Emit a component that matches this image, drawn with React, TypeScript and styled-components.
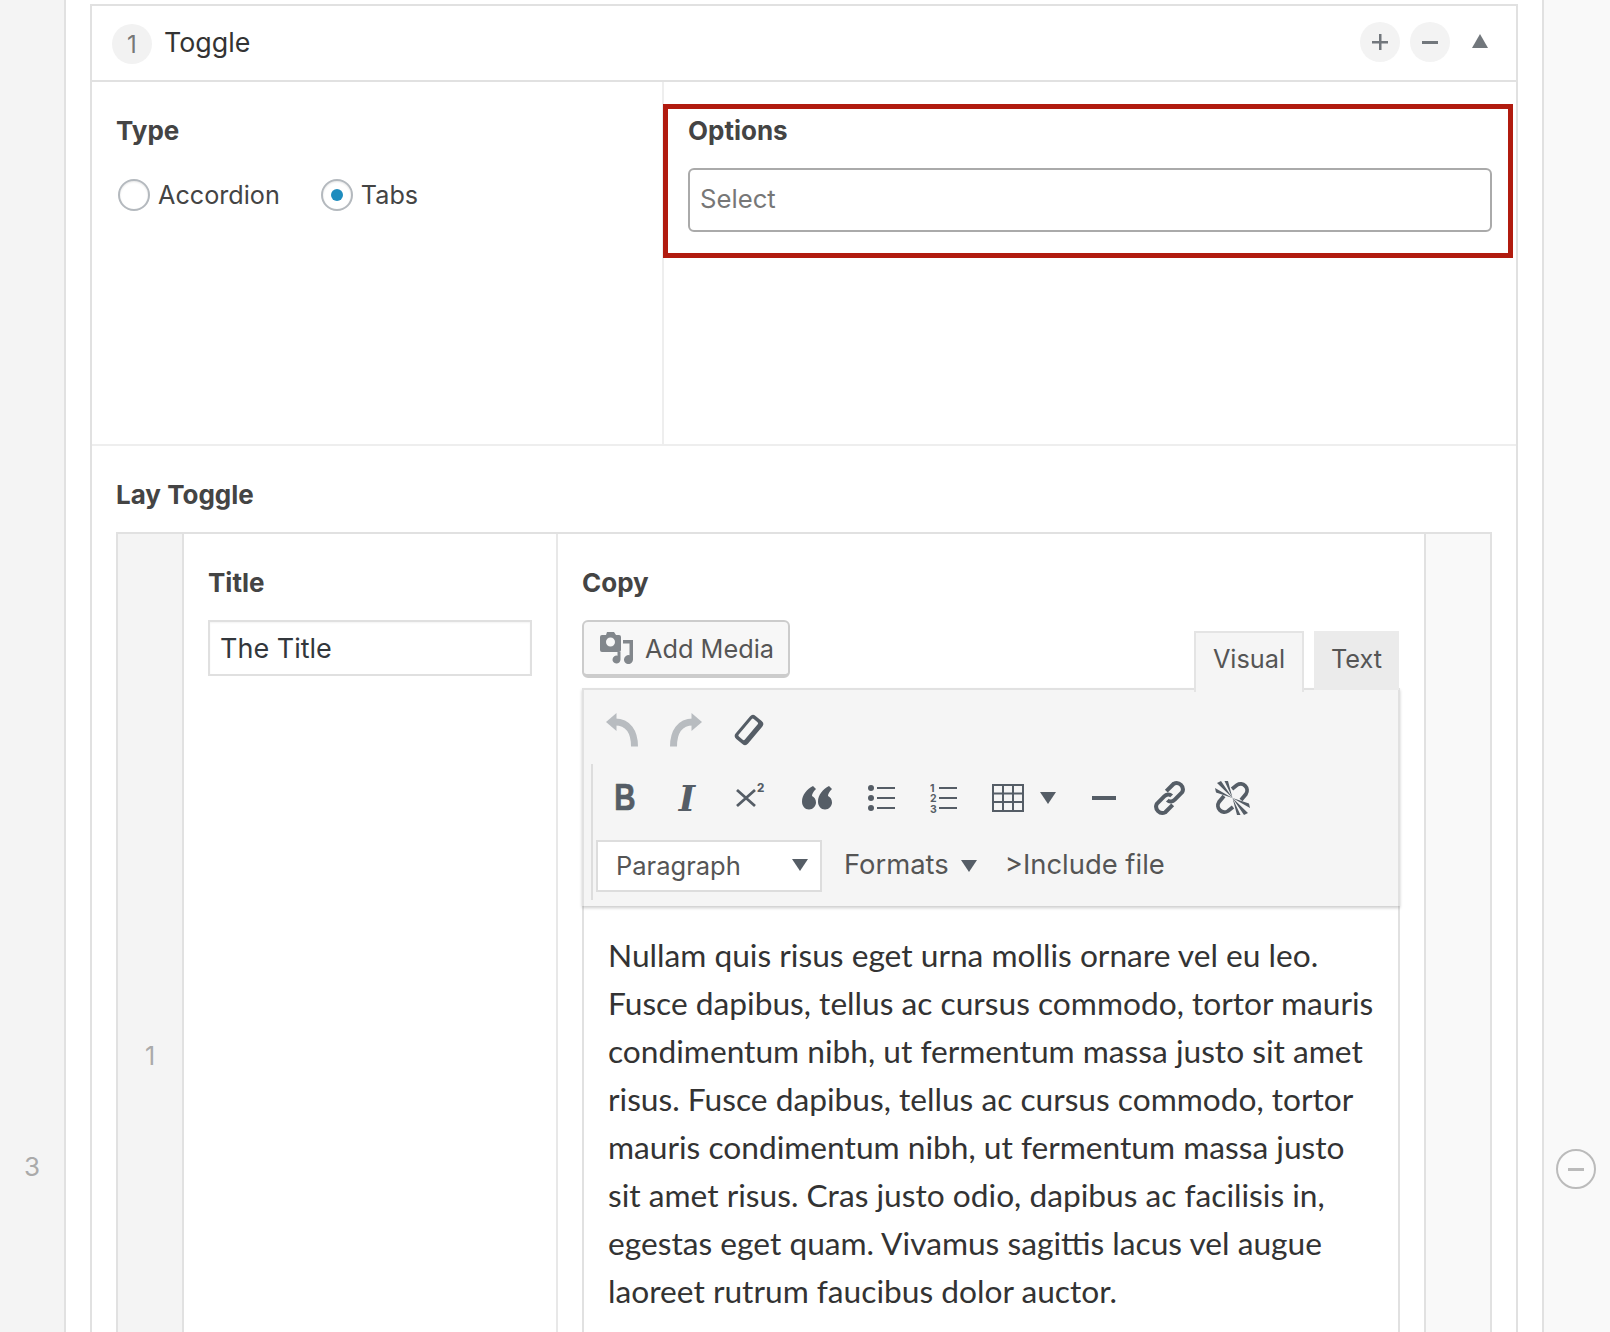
import React from "react";
import styled, { createGlobalStyle } from "styled-components";

const Global = createGlobalStyle`
  html, body { margin: 0; padding: 0; height: 1332px; overflow: hidden; background: #fff; }
  * { box-sizing: border-box; }
  #root { height: 1332px; overflow: hidden; font-family: Inter, "Liberation Sans", sans-serif; }
`;

const Page = styled.div`
  display: grid;
  grid-template-columns: 66px 1476px 68px;
  height: 2332px;
`;
const RowNumber = styled.div`
  background: #f4f4f4;
  border-right: 2px solid #e1e1e1;
  display: flex;
  align-items: center;
  justify-content: center;
  color: #aaa;
  font-size: 26px;
`;
const RowBody = styled.div`
  padding: 4px 24px 0;
`;
const RowActions = styled.div`
  background: #f9f9f9;
  border-left: 2px solid #e1e1e1;
  display: flex;
  align-items: center;
  justify-content: center;
  padding: 6px 2px 0 0;
`;
const RoundRemove = styled.span`
  width: 40px;
  height: 40px;
  border: 2px solid #bbb;
  border-radius: 50%;
  background: #fbfbfb;
  display: flex;
  align-items: center;
  justify-content: center;
  &::before { content: ""; width: 16px; height: 3px; background: #bbb; }
`;
const Card = styled.section`
  border: 2px solid #e1e1e1;
`;
const CardHeader = styled.header`
  height: 74px;
  display: flex;
  align-items: center;
  padding: 0 28px 0 20px;
  border-bottom: 2px solid #e1e1e1;
  box-sizing: content-box;
`;
const CountBadge = styled.span`
  width: 40px;
  height: 40px;
  border-radius: 50%;
  background: #f2f2f2;
  color: #777;
  font-size: 24px;
  display: flex;
  align-items: center;
  justify-content: center;
  position: relative;
  top: 1px;
`;
const CardTitle = styled.span`
  margin-left: 12px;
  font-size: 26.8px;
  color: #333;
  flex: 1;
  position: relative;
  top: -1px;
`;
const HeadButton = styled.span`
  width: 40px;
  height: 40px;
  margin-left: 10px;
  border-radius: 50%;
  background: #f3f3f3;
  display: flex;
  align-items: center;
  justify-content: center;
  position: relative;
  top: -1px;
`;
const Collapse = styled.span`
  margin-left: 22px;
  width: 0;
  height: 0;
  border-left: 8px solid transparent;
  border-right: 8px solid transparent;
  border-bottom: 14px solid #72777c;
  position: relative;
  top: -2px;
`;
const Settings = styled.div`
  display: grid;
  grid-template-columns: 570px 854px;
  height: 364px;
  border-bottom: 2px solid #eee;
`;
const SettingCell = styled.div<{ $divided?: boolean }>`
  position: relative;
  padding: 32px 24px 0 24px;
  ${(p) => (p.$divided ? "border-left: 2px solid #eee;" : "")}
`;
const Label = styled.div`
  font-size: 26px;
  line-height: 34px;
  font-weight: 700;
  color: #444;
`;
const RadioRow = styled.div`
  display: flex;
  margin-top: 31px;
  padding-left: 2px;
`;
const RadioItem = styled.label`
  display: flex;
  align-items: center;
  height: 32px;
  margin-right: 41px;
  font-size: 25.2px;
  color: #444;
`;
const RadioDot = styled.span<{ $on?: boolean }>`
  width: 32px;
  height: 32px;
  border-radius: 50%;
  border: 2px solid #b4b9be;
  margin-right: 8px;
  display: flex;
  align-items: center;
  justify-content: center;
  box-shadow: inset 0 1px 2px rgba(0, 0, 0, 0.1);
  &::before {
    content: "";
    width: 12px;
    height: 12px;
    border-radius: 50%;
    background: ${(p) => (p.$on ? "#1e8cbe" : "transparent")};
  }
`;
const SelectBox = styled.div`
  margin-top: 20px;
  height: 64px;
  border: 2px solid #aaa;
  border-radius: 6px;
  padding: 0 0 3px 10px;
  display: flex;
  align-items: center;
  color: #777;
  font-size: 25.7px;
`;
const Highlight = styled.div`
  position: absolute;
  left: -1px;
  top: 22px;
  width: 850px;
  height: 154px;
  border: 5px solid #b11b0f;
  pointer-events: none;
`;
const SubSection = styled.div`
  padding: 32px 24px 0;
`;
const Repeater = styled.div`
  margin-top: 20px;
  border: 2px solid #e1e1e1;
  display: grid;
  grid-template-columns: 66px 374px 866px 66px;
  min-height: 1048px;
`;
const ItemNumber = styled.div`
  background: #f4f4f4;
  border-right: 2px solid #e1e1e1;
  color: #aaa;
  font-size: 25px;
  display: flex;
  align-items: center;
  justify-content: center;
`;
const ItemCell = styled.div<{ $divided?: boolean }>`
  padding: 32px 24px 0;
  display: flex;
  flex-direction: column;
  ${(p) => (p.$divided ? "border-right: 2px solid #e8e8e8;" : "")}
`;
const TextField = styled.div`
  margin-top: 20px;
  height: 56px;
  border: 2px solid #e0e0e0;
  padding-left: 10px;
  display: flex;
  align-items: center;
  font-size: 27px;
  color: #32373c;
  box-shadow: inset 0 1px 2px rgba(0, 0, 0, 0.05);
`;
const ItemHandle = styled.div`
  background: #f9f9f9;
  border-left: 2px solid #e1e1e1;
`;
const EditorTop = styled.div`
  margin-top: 20px;
  height: 70px;
  display: flex;
  justify-content: space-between;
  position: relative;
  z-index: 1;
`;
const MediaButton = styled.span`
  width: 208px;
  height: 58px;
  border: 2px solid #ccc;
  border-bottom-width: 4px;
  border-radius: 6px;
  background: #f7f7f7;
  display: flex;
  align-items: center;
  padding-left: 16px;
  font-size: 25.3px;
  color: #555;
  svg { margin-right: 11px; }
`;
const Tabs = styled.div`
  display: flex;
  padding: 11px 1px 0 0;
`;
const Tab = styled.span<{ $active?: boolean }>`
  height: ${(p) => (p.$active ? 61 : 59)}px;
  width: ${(p) => (p.$active ? 110 : 85)}px;
  margin-left: 10px;
  border: 2px solid ${(p) => (p.$active ? "#e4e4e4" : "#ebebeb")};
  ${(p) => (p.$active ? "border-bottom: none;" : "")}
  background: ${(p) => (p.$active ? "#f5f5f5" : "#ebebeb")};
  display: flex;
  align-items: center;
  justify-content: center;
  font-size: 25.3px;
  color: #555;
  padding-bottom: ${(p) => (p.$active ? 8 : 4)}px;
`;
const Toolbar = styled.div`
  border: 2px solid #e1e1e1;
  border-bottom: none;
  background: #f5f5f5;
  height: 218px;
  margin-top: -2px;
  box-shadow: 0 2px 3px rgba(0, 0, 0, 0.2);
  position: relative;
`;
const ToolRow = styled.div`
  display: flex;
  align-items: center;
`;
const FirstRow = styled(ToolRow)`
  height: 74px;
  padding-left: 6px;
  padding-top: 6px;
`;
const LowerRows = styled.div`
  margin-left: 7px;
  height: 136px;
  border-left: 2px solid #ddd;
`;
const IconRow = styled(ToolRow)`
  height: 68px;
  padding-left: 1px;
`;
const MenuRow = styled(ToolRow)`
  height: 60px;
  padding: 8px 0 0 3px;
`;
const Tool = styled.span<{ $w: number }>`
  width: ${(p) => p.$w}px;
  display: flex;
  align-items: center;
  justify-content: center;
  color: #555d66;
`;
const BoldGlyph = styled.span`
  font: 700 36px/1 "Liberation Sans", sans-serif;
  color: #555d66;
  -webkit-text-stroke: 0.7px #555d66;
  transform: scaleX(0.82);
`;
const ItalicGlyph = styled.span`
  font: italic 700 35px/1 "DejaVu Serif", serif;
  color: #555d66;
`;
const ParagraphSelect = styled.span`
  width: 226px;
  height: 52px;
  background: #fff;
  border: 2px solid #ddd;
  display: flex;
  align-items: center;
  justify-content: space-between;
  padding: 0 12px 2px 18px;
  font-size: 25.5px;
  color: #555;
`;
const MenuText = styled.span<{ $ml: number }>`
  margin-left: ${(p) => p.$ml}px;
  font-size: 27.4px;
  color: #555;
  position: relative;
  top: -2px;
`;
const Caret = styled.span<{ $ml?: number }>`
  display: block;
  margin-left: ${(p) => p.$ml ?? 0}px;
  width: 0;
  height: 0;
  border-left: 8px solid transparent;
  border-right: 8px solid transparent;
  border-top: 12px solid #555d66;
`;
const EditorBody = styled.div`
  flex: 1;
  border: 2px solid #e1e1e1;
  border-top: none;
  padding: 25px 20px 0 24px;
  font-family: Lato, "Liberation Sans", sans-serif;
  font-size: 31.7px;
  line-height: 48px;
  color: #333;
`;

const Undo = ({ flip }: { flip?: boolean }) => (
  <svg width="32" height="34" viewBox="0 0 32 34" style={flip ? { transform: "scaleX(-1)" } : undefined}>
    <path d="M0 9 L10.5 0 V18 Z" fill="#b8bcc0" />
    <path d="M9 9 C22 9 28.5 19 28.5 33.5" fill="none" stroke="#b8bcc0" strokeWidth="7" />
  </svg>
);
const Eraser = () => (
  <svg width="30" height="32" viewBox="-15 -16 30 32">
    <g transform="rotate(-50)">
      <rect x="-15" y="-8" width="30" height="16" rx="4" fill="#555d66" />
      <rect x="-11.5" y="-5" width="23" height="8" rx="1.5" fill="#f5f5f5" />
    </g>
  </svg>
);
const Superscript = () => (
  <svg width="32" height="32" viewBox="0 0 32 32" fill="none" stroke="#555d66">
    <path d="M4 8 L22 24 M22 8 L4 24" strokeWidth="2.8" />
    <text x="24" y="9.5" fontSize="11.5" fontWeight="800" fontFamily="Inter, sans-serif" fill="#555d66" stroke="none">2</text>
  </svg>
);
const QuoteIcon = () => (
  <svg width="30" height="24" viewBox="0 0 30 24" fill="#555d66">
    <path d="M11 0 L14 3 C11 6 10 8 10 10 C12 11 14 13 14 16.5 C14 20 11 23.5 7 23.5 C3 23.5 0 20 0 15.5 C0 9 5 3 11 0 Z" />
    <path d="M27 0 L30 3 C27 6 26 8 26 10 C28 11 30 13 30 16.5 C30 20 27 23.5 23 23.5 C19 23.5 16 20 16 15.5 C16 9 21 3 27 0 Z" />
  </svg>
);
const BulletIcon = () => (
  <svg width="28" height="28" viewBox="0 0 28 28" fill="#555d66">
    <circle cx="3" cy="4" r="3" /><circle cx="3" cy="14" r="3" /><circle cx="3" cy="24" r="3" />
    <rect x="9" y="3" width="18" height="2" /><rect x="9" y="13" width="18" height="2" /><rect x="9" y="23" width="18" height="2" />
  </svg>
);
const NumberIcon = () => (
  <svg width="28" height="32" viewBox="0 0 28 32" fill="#555d66">
    <text x="0" y="10" fontSize="10.5" fontWeight="700" fontFamily="Inter, sans-serif">1</text>
    <text x="0" y="20" fontSize="10.5" fontWeight="700" fontFamily="Inter, sans-serif">2</text>
    <text x="0" y="30.5" fontSize="10.5" fontWeight="700" fontFamily="Inter, sans-serif">3</text>
    <rect x="9" y="5" width="18" height="2" /><rect x="9" y="15" width="18" height="2" /><rect x="9" y="25" width="18" height="2" />
  </svg>
);
const TableIcon = () => (
  <svg width="32" height="28" viewBox="0 0 32 28" fill="none" stroke="#555d66" strokeWidth="2">
    <rect x="1" y="1" width="30" height="26" strokeWidth="2" />
    <path d="M1 9.5 H31 M1 18 H31 M11 1 V27 M21 1 V27" />
  </svg>
);
const RuleIcon = () => (
  <svg width="24" height="4" viewBox="0 0 24 4"><rect width="24" height="4" fill="#555d66" /></svg>
);
const LinkIcon = () => (
  <svg width="37" height="36" viewBox="0 0 34 34" fill="none" stroke="#555d66" strokeWidth="3.8">
    <path d="M15 19 C17 21 20 20.5 22 18.5 L29 11.5 A6 6 0 0 0 21 3.5 L14 10.5" />
    <path d="M19 15 C17 13 14 13.5 12 15.5 L5 22.5 A6 6 0 0 0 13 30.5 L20 23.5" />
  </svg>
);
const UnlinkIcon = () => (
  <svg width="35" height="34" viewBox="0 0 35 34" fill="#555d66">
    <path d="M17 8 L22 4 A6.5 6.5 0 0 1 31 13 L26 19" fill="none" stroke="#555d66" strokeWidth="3.8" />
    <path d="M18 26 L13 30 A6.5 6.5 0 0 1 4 21 L9 15" fill="none" stroke="#555d66" strokeWidth="3.8" />
    <path d="M17.5 17 L0 7 L1 11.5 Z M17.5 17 L2 2 L6 0 Z M17.5 17 L9.5 0 L13 0 Z M17.5 17 L35 27 L34 22.5 Z M17.5 17 L33 32 L29 34 Z M17.5 17 L25.5 34 L22 34 Z" />
  </svg>
);
const MediaIcon = () => (
  <svg width="34" height="32" viewBox="0 0 34 32" fill="#82878c">
    <path d="M2 3 H6 L7 0 H14 L16 3 H19 Q21 3 21 5 V18 Q21 20 19 20 H2 Q0 20 0 18 V5 Q0 3 2 3 Z M10.5 5.5 A4.5 4.5 0 1 0 10.501 14.5 A4.5 4.5 0 1 0 10.5 5.5 Z" fillRule="evenodd" />
    <path d="M23 8 H33 V27.5 A4.5 4.5 0 1 1 29.5 23.2 V11.5 H23 Z" />
    <path d="M17.5 20 H20.5 V27.5 A4 4 0 1 1 17.5 23.7 Z" />
  </svg>
);
const PlusIcon = () => (
  <svg width="18" height="18" viewBox="0 0 18 18" fill="#72777c"><rect x="8" y="1" width="2.5" height="16" /><rect x="1" y="8" width="16" height="2.5" /></svg>
);
const MinusIcon = () => (
  <svg width="18" height="18" viewBox="0 0 18 18" fill="#72777c"><rect x="1" y="8" width="16" height="3" /></svg>
);

export default function App() {
  return (
    <>
      <Global />
      <Page>
        <RowNumber>3</RowNumber>
        <RowBody>
          <Card>
            <CardHeader>
              <CountBadge>1</CountBadge>
              <CardTitle>Toggle</CardTitle>
              <HeadButton><PlusIcon /></HeadButton>
              <HeadButton><MinusIcon /></HeadButton>
              <Collapse />
            </CardHeader>
            <Settings>
              <SettingCell>
                <Label>Type</Label>
                <RadioRow>
                  <RadioItem><RadioDot />Accordion</RadioItem>
                  <RadioItem><RadioDot $on />Tabs</RadioItem>
                </RadioRow>
              </SettingCell>
              <SettingCell $divided>
                <Label>Options</Label>
                <SelectBox>Select</SelectBox>
                <Highlight />
              </SettingCell>
            </Settings>
            <SubSection>
              <Label>Lay Toggle</Label>
              <Repeater>
                <ItemNumber>1</ItemNumber>
                <ItemCell $divided>
                  <Label>Title</Label>
                  <TextField>The Title</TextField>
                </ItemCell>
                <ItemCell>
                  <Label>Copy</Label>
                  <EditorTop>
                    <MediaButton><MediaIcon />Add Media</MediaButton>
                    <Tabs>
                      <Tab $active>Visual</Tab>
                      <Tab>Text</Tab>
                    </Tabs>
                  </EditorTop>
                  <Toolbar>
                    <FirstRow>
                      <Tool $w={64}><Undo /></Tool>
                      <Tool $w={64}><Undo flip /></Tool>
                      <Tool $w={62}><Eraser /></Tool>
                    </FirstRow>
                    <LowerRows>
                      <IconRow>
                        <Tool $w={62}><BoldGlyph>B</BoldGlyph></Tool>
                        <Tool $w={62}><ItalicGlyph>I</ItalicGlyph></Tool>
                        <Tool $w={62}><Superscript /></Tool>
                        <Tool $w={74}><QuoteIcon /></Tool>
                        <Tool $w={56}><BulletIcon /></Tool>
                        <Tool $w={68}><NumberIcon /></Tool>
                        <Tool $w={60}><TableIcon /></Tool>
                        <Tool $w={20}><Caret /></Tool>
                        <Tool $w={92}><RuleIcon /></Tool>
                        <Tool $w={38}><LinkIcon /></Tool>
                        <Tool $w={88}><UnlinkIcon /></Tool>
                      </IconRow>
                      <MenuRow>
                        <ParagraphSelect>Paragraph<Caret /></ParagraphSelect>
                        <MenuText $ml={22}>Formats</MenuText>
                        <Caret $ml={12} />
                        <MenuText $ml={28}>&gt;Include file</MenuText>
                      </MenuRow>
                    </LowerRows>
                  </Toolbar>
                  <EditorBody>
                    Nullam quis risus eget urna mollis ornare vel eu leo. Fusce dapibus, tellus ac cursus commodo, tortor mauris condimentum nibh, ut fermentum massa justo sit amet risus. Fusce dapibus, tellus ac cursus commodo, tortor mauris condimentum nibh, ut fermentum massa justo sit amet risus. Cras justo odio, dapibus ac facilisis in, egestas eget quam. Vivamus sagittis lacus vel augue laoreet rutrum faucibus dolor auctor.
                  </EditorBody>
                </ItemCell>
                <ItemHandle />
              </Repeater>
            </SubSection>
          </Card>
        </RowBody>
        <RowActions><RoundRemove /></RowActions>
      </Page>
    </>
  );
}
